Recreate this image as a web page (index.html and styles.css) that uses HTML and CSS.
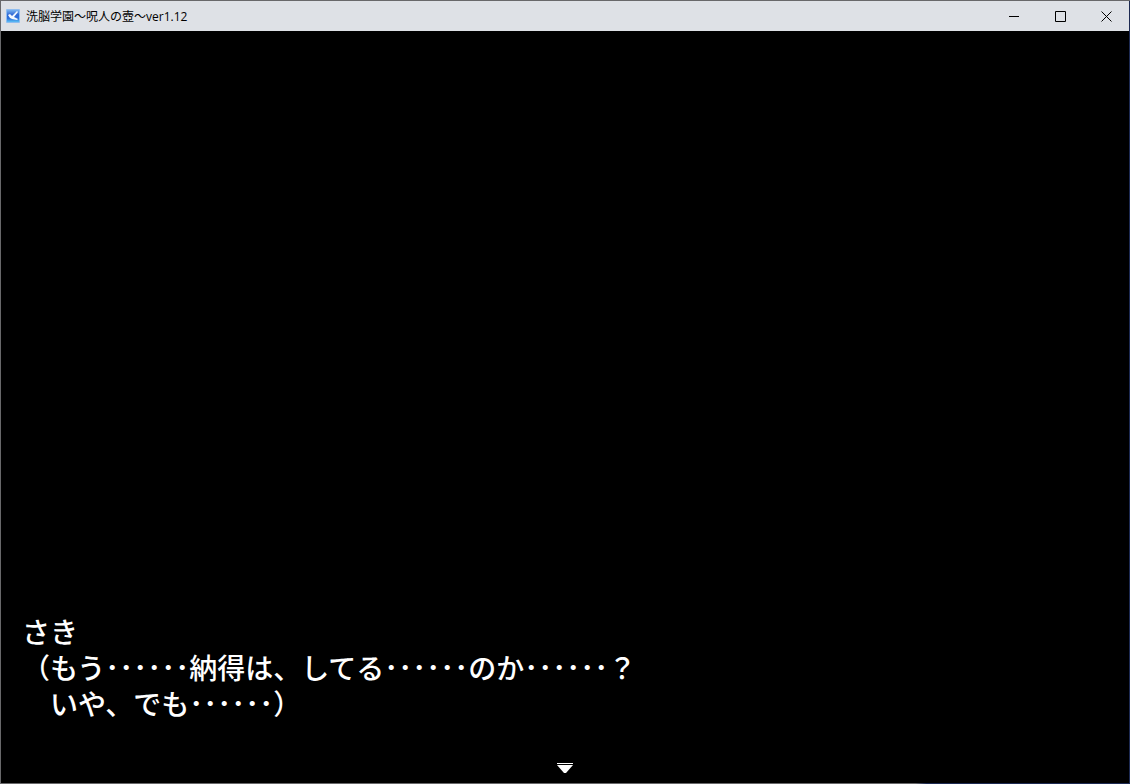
FILE: index.html
```html
<!DOCTYPE html>
<html lang="ja">
<head>
    <meta charset="UTF-8">
    <title>洗脳学園～呪人の壺～ver1.12</title>
    <link rel="stylesheet" href="styles.css">
</head>
<body>
<main class="window">
    <header class="titlebar">
        <svg class="app-icon" viewBox="0 0 14 14" aria-hidden="true">
            <defs>
                <linearGradient id="iconFill" x1="0" y1="0" x2="0" y2="1">
                    <stop offset="0" stop-color="#78b2f0"/>
                    <stop offset="0.4" stop-color="#2f68d4"/>
                    <stop offset="0.7" stop-color="#2a6edb"/>
                    <stop offset="1" stop-color="#5cc0f4"/>
                </linearGradient>
            </defs>
            <rect width="14" height="14" rx="1" fill="#8fbdf0"/>
            <rect x="1" y="1" width="12" height="12" fill="url(#iconFill)"/>
            <path d="M2 6L4 5L6 7L11 2L12 3L8 8L12 10L11 11L6 10L4 9Z" fill="#f4f9ff"/>
        </svg>
        <h1 class="title">洗脳学園～呪人の壺～ver1.12</h1>
        <div class="window-buttons">
            <button type="button" aria-label="最小化">
                <svg viewBox="0 0 11 11"><path d="M0 5.5H10"/></svg>
            </button>
            <button type="button" aria-label="最大化">
                <svg viewBox="0 0 11 11"><path d="M0.5 0.5H10.5V10.5H0.5Z"/></svg>
            </button>
            <button type="button" aria-label="閉じる">
                <svg viewBox="0 0 11 11"><path d="M0.5 0.5L10.5 10.5M10.5 0.5L0.5 10.5"/></svg>
            </button>
        </div>
    </header>
    <section class="screen">
        <div class="message">
            <p>さき</p>
            <p>（もう･･････納得は、してる･･････のか･･････？</p>
            <p>　いや、でも･･････）</p>
        </div>
        <button type="button" class="next" aria-label="次へ">
            <svg viewBox="0 0 16 10"><path d="M0 0H16V1H0ZM0 2H16L9 10H7Z"/></svg>
        </button>
    </section>
</main>
</body>
</html>
```

FILE: styles.css
```css
* {
    box-sizing: border-box;
}

body {
    margin: 0;
    background-color: #000;
    font-family: "Noto Sans CJK JP", sans-serif;
}

button {
    padding: 0;
    border: 0;
    background: none;
}

svg {
    display: block;
}

/* the background shows as the left, right and bottom window frame */
.window {
    display: flex;
    flex-direction: column;
    min-height: 100vh;
    padding: 0 1px 1px;
    border-top: 1px solid #68686a;
    background: linear-gradient(to right, #68686a 81%, #1d2a52 82%);
}

.titlebar {
    display: flex;
    align-items: center;
    height: 30px;
    padding-left: 5px;
    background-color: #dee1e6;
}

.app-icon {
    width: 14px;
    height: 14px;
}

.title {
    flex: 1;
    margin: 0;
    padding: 2px 0 0 6px;
    font-family: "Open Sans", "Noto Sans CJK JP", sans-serif;
    font-size: 12px;
    font-weight: 400;
    line-height: 16px;
    color: #000;
}

.window-buttons {
    display: flex;
}

.window-buttons button {
    display: flex;
    justify-content: center;
    align-items: center;
    width: 46px;
    height: 30px;
}

.window-buttons svg {
    width: 11px;
    height: 11px;
    fill: none;
    stroke: #000;
}

.screen {
    display: flex;
    flex: 1;
    flex-direction: column;
    justify-content: flex-end;
    background-color: #000;
}

.message {
    padding: 0 21px 42px;
    font-size: 28px;
    font-weight: 500;
    line-height: 36px;
    color: #fff;
}

.message p {
    margin: 0;
    white-space: pre-wrap;
}

.next {
    align-self: center;
    margin-bottom: 10px;
}

.next svg {
    width: 16px;
    height: 10px;
    fill: #fff;
}
```
